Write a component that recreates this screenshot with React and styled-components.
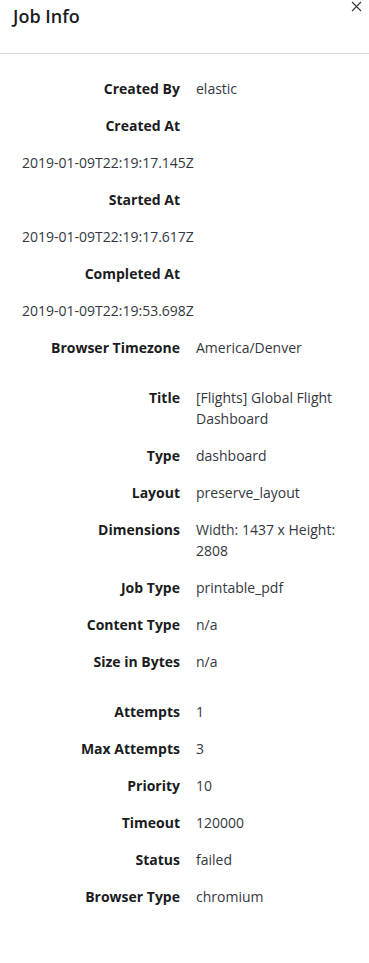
import React from "react";
import styled, { createGlobalStyle } from "styled-components";

const Global = createGlobalStyle`
  html, body { margin: 0; padding: 0; background: #fff; }
  body { font-family: "Open Sans", "Noto Sans", sans-serif; color: #343741; }
  * { box-sizing: border-box; }
`;

const Flyout = styled.div`
  width: 369px;
  min-height: 963px;
  background: #fff;
  position: relative;
`;

const Header = styled.div`
  height: 54px;
  padding: 3px 13px 0;
  border-bottom: 1px solid #d3dae6;
`;

const Title = styled.h2`
  margin: 0;
  font-size: 18px;
  line-height: 26px;
  font-weight: 600;
  color: #1a1c21;
`;

const Close = styled.button`
  position: absolute;
  top: 0;
  right: 6px;
  width: 14px;
  height: 12px;
  padding: 0;
  border: 0;
  background: none;
  display: flex;
  align-items: center;
  justify-content: center;
  color: #343741;
`;

const Body = styled.div`
  padding: 24px 22px 40px;
  display: flex;
  flex-direction: column;
  gap: 29px;
`;

const List = styled.dl`
  margin: 0;
  display: flex;
  flex-direction: column;
  gap: 16px;
`;

const Row = styled.div`
  display: flex;
  flex-wrap: wrap;
  row-gap: 16px;
`;

const Term = styled.dt`
  width: 158px;
  text-align: right;
  font-size: 14px;
  line-height: 21px;
  font-weight: 700;
  color: #1a1c21;
`;

const Desc = styled.dd`
  margin: 0;
  padding-left: ${(p) => (p.$block ? "0" : "16px")};
  width: ${(p) => (p.$block ? "100%" : "calc(100% - 158px)")};
  font-size: 14px;
  line-height: 21px;
  color: #343741;
`;

const groups = [
  [
    ["Created By", "elastic"],
    ["Created At", "2019-01-09T22:19:17.145Z", true],
    ["Started At", "2019-01-09T22:19:17.617Z", true],
    ["Completed At", "2019-01-09T22:19:53.698Z", true],
    ["Browser Timezone", "America/Denver"],
  ],
  [
    ["Title", "[Flights] Global Flight Dashboard"],
    ["Type", "dashboard"],
    ["Layout", "preserve_layout"],
    ["Dimensions", "Width: 1437 x Height: 2808"],
    ["Job Type", "printable_pdf"],
    ["Content Type", "n/a"],
    ["Size in Bytes", "n/a"],
  ],
  [
    ["Attempts", "1"],
    ["Max Attempts", "3"],
    ["Priority", "10"],
    ["Timeout", "120000"],
    ["Status", "failed"],
    ["Browser Type", "chromium"],
  ],
];

export default function App() {
  return (
    <Flyout>
      <Global />
      <Header>
        <Title>Job Info</Title>
      </Header>
      <Close aria-label="Close">
        <svg width="11" height="11" viewBox="0 0 11 11">
          <path d="M1 1L10 10M10 1L1 10" stroke="#343741" strokeWidth="1.1" fill="none" />
        </svg>
      </Close>
      <Body>
        {groups.map((g, i) => (
          <List key={i}>
            {g.map(([t, d, block]) => (
              <Row key={t}>
                <Term>{t}</Term>
                <Desc $block={block}>{d}</Desc>
              </Row>
            ))}
          </List>
        ))}
      </Body>
    </Flyout>
  );
}
